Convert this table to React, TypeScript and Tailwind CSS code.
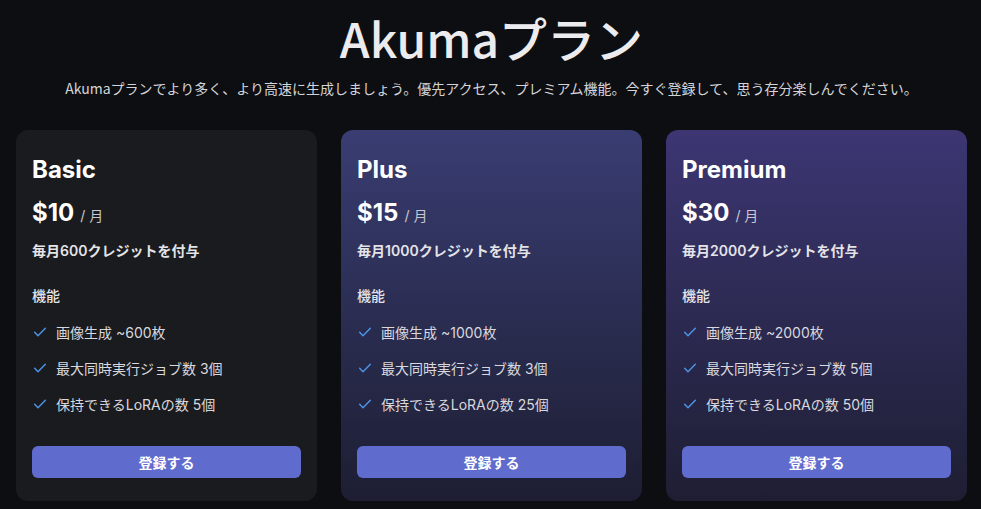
import React from "react";

const plans = [
  {
    name: "Basic",
    price: "$10",
    credits: "毎月600クレジットを付与",
    features: ["画像生成 ~600枚", "最大同時実行ジョブ数 3個", "保持できるLoRAの数 5個"],
    bg: "bg-[#1a1b1e]",
  },
  {
    name: "Plus",
    price: "$15",
    credits: "毎月1000クレジットを付与",
    features: ["画像生成 ~1000枚", "最大同時実行ジョブ数 3個", "保持できるLoRAの数 25個"],
    bg: "bg-gradient-to-b from-[#393d72] to-[#1d1e33]",
  },
  {
    name: "Premium",
    price: "$30",
    credits: "毎月2000クレジットを付与",
    features: ["画像生成 ~2000枚", "最大同時実行ジョブ数 5個", "保持できるLoRAの数 50個"],
    bg: "bg-gradient-to-b from-[#3c3673] to-[#1e1e33]",
  },
];

function Check() {
  return (
    <svg width="16" height="16" viewBox="0 0 24 24" fill="none" stroke="#4d94e6" strokeWidth="2.2" strokeLinecap="round" strokeLinejoin="round">
      <path d="M4 12.5l5 5L20 6.5" />
    </svg>
  );
}

export default function App() {
  return (
    <div
      className="min-h-[509px] w-full bg-[#0d0e12] pl-4 pr-[14px] pt-[13px]"
      style={{ fontFamily: "Inter, 'Noto Sans CJK JP', sans-serif" }}
    >
      <h1
        className="text-center text-[48px] leading-[48px] font-medium text-[#ececef]"
        style={{ fontFamily: "'Noto Sans CJK JP', sans-serif" }}
      >
        Akumaプラン
      </h1>
      <p
        className="mt-[17px] text-center text-[14px] leading-5 text-[#d4d4d8]"
        style={{ fontFamily: "'Noto Sans CJK JP', sans-serif" }}
      >
        Akumaプランでより多く、より高速に生成しましょう。優先アクセス、プレミアム機能。今すぐ登録して、思う存分楽しんでください。
      </p>
      <div className="mt-8 grid grid-cols-3 gap-6">
        {plans.map((p) => (
          <div key={p.name} className={`rounded-xl ${p.bg} px-4 pt-6 pb-[23px]`}>
            <h2 className="text-[24px] leading-8 font-bold text-white">{p.name}</h2>
            <div className="mt-[11px] flex items-baseline h-8">
              <span className="text-[24px] leading-8 font-bold text-white">{p.price}</span>
              <span className="ml-1.5 text-[14px] text-[#c8c8d0]">/ 月</span>
            </div>
            <p className="mt-3 text-[14px] leading-5 font-semibold text-[#e4e4e8]">{p.credits}</p>
            <p className="mt-[25px] text-[14px] leading-5 font-medium text-[#e4e4e8]">機能</p>
            <ul className="mt-4 flex flex-col gap-4">
              {p.features.map((f) => (
                <li key={f} className="flex items-center h-5 text-[14px] text-[#d8d8de]">
                  <span className="mr-2"><Check /></span>
                  {f}
                </li>
              ))}
            </ul>
            <button className="mt-8 h-8 w-full rounded-md bg-[#5f6bcd] text-[14px] font-semibold text-white">
              登録する
            </button>
          </div>
        ))}
      </div>
    </div>
  );
}
